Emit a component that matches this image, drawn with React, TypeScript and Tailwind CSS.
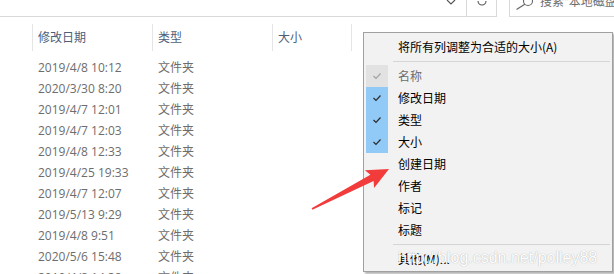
import React from 'react';

const rows = [
  '2019/4/8 10:12',
  '2020/3/30 8:20',
  '2019/4/7 12:01',
  '2019/4/7 12:03',
  '2019/4/8 12:33',
  '2019/4/25 19:33',
  '2019/4/7 12:07',
  '2019/5/13 9:29',
  '2019/4/8 9:51',
  '2020/5/6 15:48',
  '2019/4/8 14:38',
];

type ItemState = 'disabled' | 'checked' | 'none';

const columns: { label: string; state: ItemState }[] = [
  { label: '名称', state: 'disabled' },
  { label: '修改日期', state: 'checked' },
  { label: '类型', state: 'checked' },
  { label: '大小', state: 'checked' },
  { label: '创建日期', state: 'none' },
  { label: '作者', state: 'none' },
  { label: '标记', state: 'none' },
  { label: '标题', state: 'none' },
];

const Check = ({ color }: { color: string }) => (
  <svg width="22" height="22" viewBox="0 0 22 22">
    <path d="M7.5 11 L10 13.5 L14.5 8.5" fill="none" stroke={color} strokeWidth="1.2" />
  </svg>
);

const MenuItem = ({ label, state }: { label: string; state: ItemState }) => (
  <div className="flex h-[22px] items-center">
    <div
      className={`ml-[2px] flex h-[22px] w-[22px] items-center justify-center ${
        state === 'checked' ? 'bg-[#91c9f7]' : state === 'disabled' ? 'bg-[#e2e2e2]' : ''
      }`}
    >
      {state === 'checked' && <Check color="#2b2b2b" />}
      {state === 'disabled' && <Check color="#a3a3a3" />}
    </div>
    <span className={`ml-[10px] ${state === 'disabled' ? 'text-[#6d6d6d]' : 'text-black'}`}>{label}</span>
  </div>
);

const Separator = () => (
  <div className="flex h-[7px] items-center pl-[29px] pr-[2px]">
    <div className="h-px w-full bg-[#d5d5d5]" />
  </div>
);

export default function App() {
  return (
    <div
      className="relative h-[274px] w-[614px] overflow-hidden bg-white text-[12px]"
      style={{ fontFamily: '"Open Sans", "Noto Sans CJK SC", sans-serif' }}
    >
      {/* toolbar remains at top */}
      <div className="flex h-[17px]">
        <div className="flex w-[466px] justify-end border-b border-[#d9d9d9] pr-[10px]">
          <svg width="10" height="6" viewBox="0 0 10 6">
            <path d="M1 0 L5 4 L9 0" fill="none" stroke="#555" strokeWidth="1.2" />
          </svg>
        </div>
        <div className="flex w-[31px] justify-center border-x border-b border-[#d9d9d9]">
          <svg width="12" height="8" viewBox="0 0 12 8">
            <path d="M2 1 A4 4 0 1 0 10 1" fill="none" stroke="#555" strokeWidth="1.1" />
          </svg>
        </div>
        <div className="w-[12px]" />
        <div className="flex flex-1 overflow-hidden border-b border-l border-[#d9d9d9] pl-[5px]">
          <svg width="18" height="10" viewBox="0 0 18 10" className="shrink-0">
            <circle cx="13" cy="1" r="4.5" fill="none" stroke="#666" strokeWidth="1.1" />
            <path d="M9.8 4.2 L1.5 9.5" stroke="#666" strokeWidth="1.2" />
          </svg>
          <span className="-mt-[4px] ml-[7px] whitespace-nowrap leading-[12px] text-[#6d6d6d]">
            搜索"本地磁盘 (D:)"
          </span>
        </div>
      </div>

      {/* column header */}
      <div className="mt-[7px] flex h-[27px] text-[#4c607a]">
        <div className="w-[32px]" />
        <div className="flex w-[120px] items-center border-l border-[#e5e5e5] pl-[5px]">修改日期</div>
        <div className="flex w-[120px] items-center border-l border-[#e5e5e5] pl-[5px]">类型</div>
        <div className="flex w-[79px] items-center border-l border-[#e5e5e5] pl-[5px]">大小</div>
        <div className="w-[12px] border-l border-[#e5e5e5]" />
      </div>

      <div className="mt-[6px] text-[#6d6d6d]">
        {rows.map((r) => (
          <div key={r} className="flex h-[21px] items-center">
            <div className="w-[38px]" />
            <div className="w-[120px] whitespace-nowrap">{r}</div>
            <div>文件夹</div>
          </div>
        ))}
      </div>

      {/* context menu */}
      <div
        className="absolute left-[363px] top-[32px] w-[250px] border border-[#a0a0a0] bg-[#f2f2f2] pb-[1px] pt-[3px] shadow-[2px_2px_2px_rgba(0,0,0,0.3)]"
        style={{ fontFamily: '"Noto Sans CJK SC", "Open Sans", sans-serif' }}
      >
        <div className="flex h-[22px] items-center pl-[34px] text-black">将所有列调整为合适的大小(A)</div>
        <Separator />
        {columns.map((c) => (
          <MenuItem key={c.label} label={c.label} state={c.state} />
        ))}
        <Separator />
        <div className="flex h-[22px] items-center pl-[34px] text-black">其他(M)...</div>
      </div>

      {/* watermark */}
      <div
        className="pointer-events-none absolute left-[398px] top-[248px] whitespace-nowrap text-[16px] leading-[20px] text-white [text-shadow:0_0_1px_rgba(0,0,0,0.35)]"
        style={{ fontFamily: '"Liberation Sans", sans-serif' }}
      >
        http://blog.csdn.net/polley88
      </div>

      {/* red arrow */}
      <svg className="pointer-events-none absolute left-0 top-0" width="614" height="274" viewBox="0 0 614 274">
        <polygon
          points="311.6,208.3 370.4,174.7 364.9,170.2 389,169 374.1,188 373.6,180.9 312.4,209.7"
          fill="#f23c3c"
        />
      </svg>
    </div>
  );
}
